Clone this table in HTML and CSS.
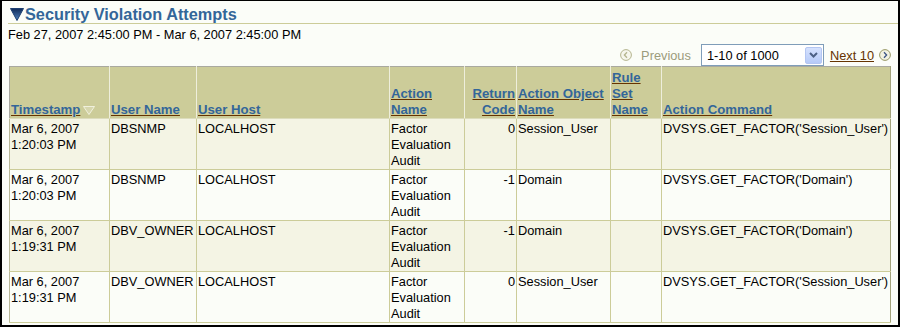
FILE: index.html
```html
<!DOCTYPE html>
<html>
<head>
<meta charset="utf-8">
<link rel="stylesheet" href="styles.css">
</head>
<body>
<div class="frame">
  <div class="title">
    <svg class="disclose" width="14" height="13" viewBox="0 0 14 13">
      <defs><linearGradient id="tg" x1="0" y1="0" x2="0" y2="1"><stop offset="0" stop-color="#0f2a58"/><stop offset="1" stop-color="#4f82bd"/></linearGradient></defs>
      <polygon points="0.5,0.5 13.5,0.5 7,12.5" fill="url(#tg)" stroke="#1d3f70" stroke-width="1"/>
    </svg>
    <h1>Security Violation Attempts</h1>
  </div>
  <div class="range">Feb 27, 2007 2:45:00 PM - Mar 6, 2007 2:45:00 PM</div>
  <div class="nav">
    <svg class="prev-icon" width="12" height="12" viewBox="0 0 12 12"><circle cx="6" cy="6" r="5.4" fill="#f6f6ec" stroke="#b4b48e" stroke-width="1"/><path d="M7 3.3 L4.4 6 L7 8.7" fill="none" stroke="#b4b48e" stroke-width="1.3"/></svg>
    <span class="prev">Previous</span>
    <div class="select"><span>1-10 of 1000</span><span class="drop"><svg width="9" height="6" viewBox="0 0 9 6"><path d="M1 1 L4.5 4.5 L8 1" fill="none" stroke="#4d6185" stroke-width="2"/></svg></span></div>
    <a class="next" href="#">Next 10</a>
    <svg class="next-icon" width="12" height="12" viewBox="0 0 12 12"><circle cx="6" cy="6" r="5.4" fill="#f2f2e2" stroke="#999966" stroke-width="1"/><path d="M5 3.3 L7.6 6 L5 8.7" fill="none" stroke="#3d5585" stroke-width="1.3"/></svg>
  </div>
  <table>
    <colgroup>
      <col class="c1"><col class="c2"><col class="c3"><col class="c4"><col class="c5"><col class="c6"><col class="c7"><col class="c8">
    </colgroup>
    <thead>
      <tr>
        <th><a href="#">Timestamp</a><svg class="sort" width="12" height="9" viewBox="0 0 12 9"><polygon points="0.5,0.5 11.5,0.5 6,8.5" fill="#d6d6ad" stroke="#f0f0dc" stroke-width="1"/></svg></th>
        <th><a href="#">User Name</a></th>
        <th><a href="#">User Host</a></th>
        <th><a href="#">Action Name</a></th>
        <th class="num"><a href="#">Return Code</a></th>
        <th><a href="#">Action Object Name</a></th>
        <th><a href="#">Rule Set Name</a></th>
        <th><a href="#">Action Command</a></th>
      </tr>
    </thead>
    <tbody>
      <tr class="band">
        <td>Mar 6, 2007 1:20:03 PM</td><td>DBSNMP</td><td>LOCALHOST</td><td>Factor Evaluation Audit</td><td class="num">0</td><td>Session_User</td><td></td><td>DVSYS.GET_FACTOR('Session_User')</td>
      </tr>
      <tr>
        <td>Mar 6, 2007 1:20:03 PM</td><td>DBSNMP</td><td>LOCALHOST</td><td>Factor Evaluation Audit</td><td class="num">-1</td><td>Domain</td><td></td><td>DVSYS.GET_FACTOR('Domain')</td>
      </tr>
      <tr class="band">
        <td>Mar 6, 2007 1:19:31 PM</td><td>DBV_OWNER</td><td>LOCALHOST</td><td>Factor Evaluation Audit</td><td class="num">-1</td><td>Domain</td><td></td><td>DVSYS.GET_FACTOR('Domain')</td>
      </tr>
      <tr>
        <td>Mar 6, 2007 1:19:31 PM</td><td>DBV_OWNER</td><td>LOCALHOST</td><td>Factor Evaluation Audit</td><td class="num">0</td><td>Session_User</td><td></td><td>DVSYS.GET_FACTOR('Session_User')</td>
      </tr>
    </tbody>
  </table>
</div>
</body>
</html>
```
FILE: styles.css
```css
body {
  margin: 0;
  background: #ffffff;
  font-family: "Liberation Sans", Arial, sans-serif;
}

.frame {
  width: 900px;
  height: 327px;
  box-sizing: border-box;
  border-style: solid;
  border-color: #000000;
  border-width: 1px 2px 2px 2px;
  background: #fbfdf8;
  padding: 4px 6px 0 6px;
  overflow: hidden;
  font-size: 12.8px;
  color: #000000;
}

.title {
  display: flex;
  align-items: flex-start;
  height: 18px;
  border-bottom: 1px solid #cccc99;
  margin-right: -6px;
}

.disclose {
  margin: 3px 1px 0 2px;
  flex: none;
}

h1 {
  margin: 0;
  font-size: 16.3px;
  line-height: 18px;
  font-weight: bold;
  color: #336699;
}

.range {
  margin-top: 3px;
  line-height: 15px;
}

.nav {
  display: flex;
  justify-content: flex-end;
  align-items: center;
  height: 22px;
  margin-top: 2px;
}

.prev-icon {
  margin-right: 9px;
}

.prev {
  color: #9c9c7c;
  margin-right: 10px;
}

.select {
  width: 123px;
  height: 22px;
  box-sizing: border-box;
  border: 1px solid #7f9db9;
  background: #ffffff;
  display: flex;
  align-items: center;
  justify-content: space-between;
  padding-left: 5px;
}

.drop {
  width: 17px;
  height: 17px;
  box-sizing: border-box;
  margin-right: 1px;
  border: 1px solid #b4c6f2;
  border-radius: 2px;
  background: linear-gradient(#d6e2fe, #b6caf8);
  display: flex;
  align-items: center;
  justify-content: center;
}

.next {
  margin-left: 6px;
  color: #663300;
  text-decoration: underline;
}

.next-icon {
  margin-left: 5px;
  margin-right: 1px;
}

table {
  border-collapse: collapse;
  table-layout: fixed;
  width: 882px;
  margin-left: 1px;
}

.c1 { width: 100px; }
.c2 { width: 87px; }
.c3 { width: 193px; }
.c4 { width: 75px; }
.c5 { width: 52px; }
.c6 { width: 94px; }
.c7 { width: 51px; }
.c8 { width: 229px; }

th {
  background: #cccc99;
  vertical-align: bottom;
  text-align: left;
  padding: 3px 1px 0 1px;
  font-size: 13.2px;
  line-height: 16px;
  font-weight: bold;
  border-top: 1px solid #a9a9a0;
  border-left: 1px solid #eeeedc;
  border-right: 1px solid #eeeedc;
  border-bottom: 1px solid #dcdcbc;
}

th:first-child {
  border-left: 1px solid #a9a9a0;
}

th:last-child {
  border-right: 1px solid #a3a37c;
}

th a {
  color: #336699;
  text-decoration: underline;
  text-decoration-color: #663300;
}

.sort {
  margin-left: 3px;
  vertical-align: -1px;
}

td {
  padding: 2px 1px 0 1px;
  line-height: 16px;
  vertical-align: top;
  border: 1px solid #cccc99;
}

td:first-child {
  border-left: 1px solid #b8b898;
}

td:last-child {
  border-right: 1px solid #a3a37c;
}

.band td {
  background: #f4f4e4;
}

.num {
  text-align: right;
}
```
